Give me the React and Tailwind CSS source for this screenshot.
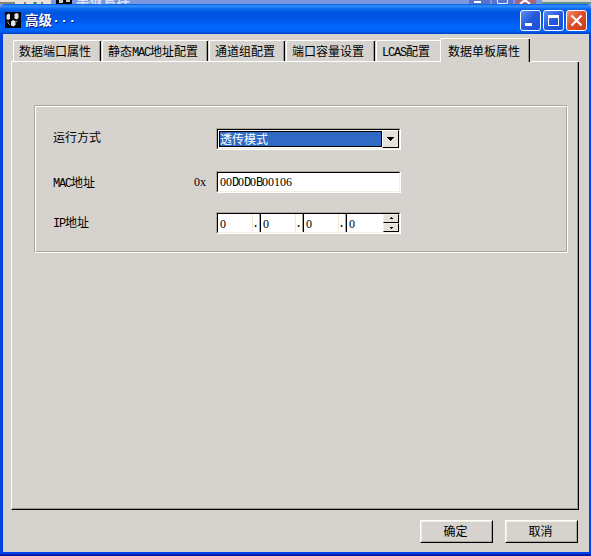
import React from "react";

const cjk = "font-['Noto_Sans_CJK_SC',sans-serif] text-[12px] leading-[14px] whitespace-nowrap";

// Digits and Latin letters use a fixed 6px advance, ideographs a 12px one.
function Txt({ children, className = "text-black" }) {
  return (
    <span className={`${cjk} ${className}`}>
      {children.split(/([0-9x]+|[A-Z.]+)/).filter(Boolean).map((part, i) => {
        if (/^[0-9x]/.test(part)) return <span key={i} className="font-['Liberation_Serif',serif]">{part}</span>;
        if (/^[A-Z.]/.test(part)) return <span key={i} className="font-['Liberation_Mono',monospace] tracking-[-1.2px]">{part}</span>;
        return <span key={i}>{part}</span>;
      })}
    </span>
  );
}

function Tab({ label, className }) {
  return (
    <div className={`h-[21px] shrink-0 rounded-tl-[2px] border-t border-l border-white ${className}`}>
      <div className="flex h-full border-r border-black">
        <div className="flex-1 border-r border-[#9c9a8c] pt-[3px] pl-[5px]">
          <Txt className="block text-black">{label}</Txt>
        </div>
      </div>
    </div>
  );
}

function Sunken({ children }) {
  return (
    <div className="h-[22px] w-[185px] border border-t-[#aca899] border-r-white border-b-white border-l-[#aca899]">
      <div className="flex h-full border border-t-black border-r-[#f1efe2] border-b-[#f1efe2] border-l-black bg-white">
        {children}
      </div>
    </div>
  );
}

function Octet({ last }) {
  return (
    <>
      <div className={`flex h-full items-center pl-[2px] ${last ? "w-[35px]" : "w-[35px] border-r border-[#ece9d8]"}`}>
        <Txt>0</Txt>
      </div>
      {!last && (
        <div className="flex h-full w-[8px] items-center border-r border-black">
          <div className="flex h-full flex-1 items-center border-r border-[#aca899]"><Txt className="-ml-[1px] text-black">.</Txt></div>
        </div>
      )}
    </>
  );
}

function Spin({ d }) {
  return (
    <div className="flex h-[9px] w-[16px] items-center justify-center border border-t-[#f1efe2] border-r-black border-b-black border-l-[#f1efe2] bg-[#e6e2d8]">
      <svg width="5" height="3" shapeRendering="crispEdges"><path d={d} fill="#000" /></svg>
    </div>
  );
}

function Push({ label }) {
  return (
    <div className="h-[23px] w-[73px] border border-t-white border-r-black border-b-black border-l-white">
      <div className="flex h-full items-center justify-center border border-t-[#f1efe2] border-r-[#aca899] border-b-[#aca899] border-l-[#f1efe2] pr-[2px] pb-[2px]">
        <Txt>{label}</Txt>
      </div>
    </div>
  );
}

function Caption({ className, children }) {
  return (
    <div className={`flex h-[21px] w-[21px] items-center justify-center rounded-[3px] border border-white ${className}`}>
      <svg width="19" height="19" viewBox="0 0 19 19">{children}</svg>
    </div>
  );
}

function Row({ label, className, labelClass, children, prefix }) {
  return (
    <div className={`flex h-[22px] ${className}`}>
      <div className={`w-[141px] shrink-0 ${labelClass}`}><Txt className="block text-black">{label}</Txt></div>
      <div className="w-[22px] shrink-0 pt-[3px]"><Txt className="block text-black">{prefix || ""}</Txt></div>
      {children}
    </div>
  );
}

export default function App() {
  return (
    <div className="flex h-[556px] w-[591px] flex-col overflow-hidden bg-[#7c9be6]">
      <div className="flex h-[4px] shrink-0 overflow-hidden bg-[#d8d5ca]">
        <div className="h-full w-[51px] shrink-0 bg-[#e6e3d6]">
          <svg width="51" height="4"><path d="M0 3H13M14 2v2M25 2v2M42 2v2" stroke="#222" fill="none" /><path d="M35 2v2" stroke="#2a8a8a" strokeWidth="3" /></svg>
        </div>
        <div className="flex h-full w-[491px] shrink-0 bg-[#7c96df]">
          <svg width="16" height="4" className="ml-[5px] shrink-0"><path d="M0 0h16v4H0z" fill="#000" /><path d="M3 0h4v3H3zM10 0h4v2h-4z" fill="#ccc" /></svg>
          <div className="-mt-[10px] ml-[4px] shrink-0"><span className="block font-['Noto_Sans_CJK_SC',sans-serif] text-[13.5px] leading-[16px] font-bold text-[#dbe3f8]">单板管理</span></div>
          <div className="mr-[6px] ml-auto flex shrink-0 gap-[2px]">
            <svg width="21" height="4"><path d="M0 0h21v4H0z" fill="#5872cf" /><path d="M5 1h7v2H5z" fill="#fff" /></svg>
            <svg width="21" height="4"><path d="M0 0h21v4H0z" fill="#5872cf" /><path d="M5.500 0v3.500h10V0" stroke="#e4e9fa" fill="none" /></svg>
            <svg width="21" height="4"><path d="M0 0h21v4H0z" fill="#a8647c" /><path d="M5 4l5-4 5 4" stroke="#fff" strokeWidth="2" fill="none" /></svg>
          </div>
        </div>
        <div className="h-full flex-1 border-t-2 border-[#d8d5ca] bg-[#5b9391]" />
      </div>

      <div className="flex flex-1 flex-col rounded-t-[6px] border-b-2 border-[#001fa8] bg-[#0042e4]">
        <div className="flex h-[30px] shrink-0 items-start rounded-t-[6px] bg-[linear-gradient(180deg,#0058d8_0px,#3391ff_2px,#0a66ee_5px,#0054e0_9px,#0058ea_16px,#0066ff_22px,#0064fb_27px,#0040c8_30px)] pl-[5px]">
          <svg width="16" height="16" viewBox="0 0 16 16" className="mt-[8px]">
            <path d="M0 0h16v16H0z" fill="#000" />
            <path d="M1.500 3l2-1.500 1.500 1v4.500l-2 1-1.500-1zM9.500 2l2-1 2 1v4l-2 1.500-2-1zM6 9.500l2-1.500 2.500 1v4l-2 1.500-2.500-1z" fill="#e4e4e4" />
            <path d="M3 9v2l2 2M12.500 8.500l-1.500 2" stroke="#999" fill="none" />
          </svg>
          <div className="mt-[7px] ml-[4px] flex font-['Noto_Sans_CJK_SC',sans-serif] text-[13.5px] leading-[16px] font-bold text-white [text-shadow:1px_1px_0_#0a1883]">
            <span>高级</span>
            <span className="font-['Liberation_Mono',monospace]">...</span>
          </div>
          <div className="mt-[6px] mr-[4px] ml-auto flex gap-[2px]">
            <Caption className="bg-[linear-gradient(135deg,#5b8df5,#2458dc_50%,#1a50d8)]"><path d="M4 12h7v3H4z" fill="#fff" /></Caption>
            <Caption className="bg-[linear-gradient(135deg,#5b8df5,#2458dc_50%,#1a50d8)]"><path d="M4 4h11v11H4zM5 7v7h9V7z" fill="#fff" fillRule="evenodd" /></Caption>
            <Caption className="bg-[linear-gradient(135deg,#f09070,#e04e28_45%,#c83c14)]"><path d="M4.5 4.500l10 10M14.500 4.500l-10 10" stroke="#fff" strokeWidth="2.200" fill="none" /></Caption>
          </div>
        </div>

        <div className="mr-[2px] mb-[2px] ml-[3px] flex flex-1 flex-col bg-[#d6d3ce] pt-[4px] pl-[8px]">
          <div className="flex h-[24px] shrink-0 items-end">
            <div className="flex h-[22px] w-[429px] gap-[1px] border-b border-white pl-[2px]">
              <Tab label="数据端口属性" className="w-[88px]" />
              <Tab label="静态MAC地址配置" className="w-[106px]" />
              <Tab label="通道组配置" className="w-[76px]" />
              <Tab label="端口容量设置" className="w-[89px]" />
              <div className="h-[21px] flex-1 rounded-tl-[2px] border-t border-l border-white pt-[3px] pl-[5px]"><Txt className="block text-black">LCAS配置</Txt></div>
            </div>
            <div className="h-[24px] w-[90px] rounded-tl-[2px] border-t border-l border-white">
              <div className="h-full border-r border-black">
                <div className="h-full border-r border-[#9c9a8c] pt-[5px] pl-[7px]"><Txt className="block text-black">数据单板属性</Txt></div>
              </div>
            </div>
            <div className="h-[22px] w-[49px] border-b border-white" />
          </div>

          <div className="h-[448px] w-[568px] shrink-0 border-r border-b border-l border-r-black border-b-black border-l-white">
            <div className="h-full border-r border-b border-[#9c9a8c] pt-[43px] pl-[22px]">
              <div className="h-[148px] w-[534px] border border-t-[#aca899] border-r-white border-b-white border-l-[#aca899]">
                <div className="h-full border border-t-white border-r-[#aca899] border-b-[#aca899] border-l-white pt-[21px] pl-[17px]">
                  <Row label="运行方式" labelClass="pt-[2px]">
                    <Sunken>
                      <div className="my-[1px] ml-[1px] flex w-[163px] items-center border border-black bg-[#316ac5]"><Txt className="text-white">透传模式</Txt></div>
                      <div className="ml-auto flex w-[17px] items-center justify-center border border-t-white border-r-black border-b-black border-l-white bg-[#e6e2d8]">
                        <svg width="7" height="4" shapeRendering="crispEdges"><path d="M0 0h7v1H0zM1 1h5v1H1zM2 2h3v1H2zM3 3h1v1H3z" /></svg>
                      </div>
                    </Sunken>
                  </Row>
                  <Row label="MAC地址" prefix="0x" className="mt-[21px]" labelClass="pt-[4px]">
                    <Sunken><div className="flex items-center pl-[2px]"><Txt>00D0D0B00106</Txt></div></Sunken>
                  </Row>
                  <Row label="IP地址" className="mt-[19px]" labelClass="pt-[3px]">
                    <Sunken>
                      <Octet /><Octet /><Octet /><Octet last />
                      <div className="ml-auto"><Spin d="M2 0h1v1H2zM1 1h3v1H1z" /><Spin d="M1 1h3v1H1zM2 2h1v1H2z" /></div>
                    </Sunken>
                  </Row>
                </div>
              </div>
            </div>
          </div>

          <div className="mt-[10px] mr-[11px] flex justify-end gap-[12px]">
            <Push label="确定" />
            <Push label="取消" />
          </div>
        </div>
      </div>
    </div>
  );
}
